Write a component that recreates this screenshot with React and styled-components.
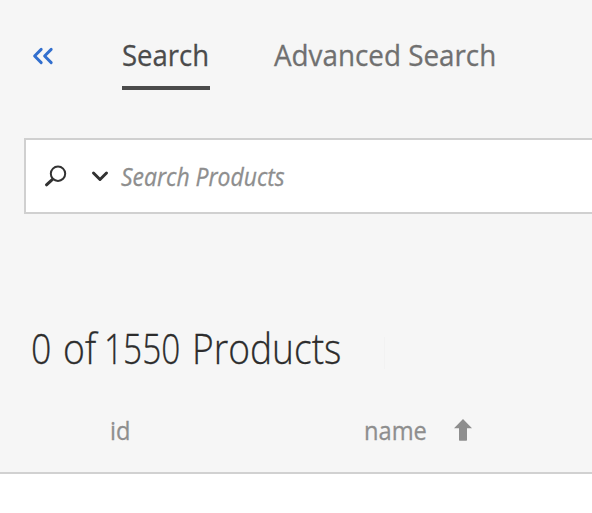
import React from "react";
import styled, { createGlobalStyle } from "styled-components";

const GlobalStyle = createGlobalStyle`
  * { box-sizing: border-box; }
  body { margin: 0; background: #fff; overflow: hidden; font-family: "Open Sans", "Noto Sans", sans-serif; }
`;

const Page = styled.main`
  width: 592px;
  height: 513px;
  overflow: hidden;
  background: #fff;
`;

const Panel = styled.section`
  height: 474px;
  background: #f6f6f6;
  border-bottom: 2px solid #d1d1d1;
`;

const Tabs = styled.nav`
  display: flex;
  height: 90px;
  padding-left: 32px;
`;

const Collapse = styled.button`
  width: 22px;
  height: 20px;
  margin: 46px 68px 0 0;
  padding: 0;
  border: 0;
  background: none;
  color: #326fce;
  svg { display: block; }
`;

const Tab = styled.a`
  width: ${(p) => p.$width}px;
  height: 90px;
  padding-top: 35px;
  margin-right: 64px;
  white-space: nowrap;
  line-height: 40px;
  color: ${(p) => (p.$active ? "#4b4b4b" : "#707070")};
  border-bottom: 4px solid ${(p) => (p.$active ? "#4b4b4b" : "transparent")};
`;

const Fit = styled.span`
  display: inline-block;
  font-size: ${(p) => p.$size}px;
  font-weight: ${(p) => p.$weight || 400};
  font-style: ${(p) => (p.$italic ? "italic" : "normal")};
  transform: scaleX(${(p) => p.$scale || 1});
  transform-origin: left center;
  white-space: nowrap;
  -webkit-text-stroke: ${(p) => p.$stroke || 0}px currentColor;
`;

const SearchBox = styled.div`
  display: flex;
  align-items: center;
  height: 76px;
  width: 600px;
  margin: 48px 0 0 24px;
  padding-left: 18px;
  background: #fff;
  border: 2px solid #d0d0d0;
  color: #323232;
`;

const Chevron = styled.svg`
  margin: 0 11px 0 22px;
`;

const Placeholder = styled.span`
  padding-top: 3px;
  color: #8e8e8e;
  line-height: 40px;
`;

const ResultBar = styled.div`
  display: flex;
  align-items: center;
  height: 60px;
  margin: 106px 0 0 31px;
`;

const Heading = styled.h1`
  display: flex;
  width: 353px;
  margin: 0;
  line-height: 60px;
  color: #2c2c2c;
`;

const Word = styled.span`
  width: ${(p) => p.$width}px;
`;

const Divider = styled.span`
  width: 1px;
  height: 32px;
  margin-top: 6px;
  background: #f2f2f2;
`;

const Columns = styled.div`
  display: flex;
  margin-top: 30px;
  height: 40px;
  line-height: 40px;
  padding-left: 110px;
  color: #8e8e8e;
`;

const Column = styled.span`
  width: ${(p) => p.$width}px;
`;

const Sort = styled.svg`
  margin-top: 9px;
`;

const words = [
  { text: "0", width: 32, scale: 0.86 },
  { text: "of", width: 41, scale: 0.9 },
  { text: "1550", width: 88, scale: 0.805 },
  { text: "Products", width: 160, scale: 0.895 },
];

export default function App() {
  return (
    <Page>
      <GlobalStyle />
      <Panel>
        <Tabs>
          <Collapse aria-label="Collapse">
            <svg width="22" height="20" fill="none" stroke="currentColor" strokeWidth="2.9" strokeLinecap="round" strokeLinejoin="round">
              <path d="M9.2 3.4 2.6 10l6.6 6.6M19.2 3.4 12.6 10l6.6 6.6" />
            </svg>
          </Collapse>
          <Tab $active $width={88}><Fit $size={30} $scale={0.917} $stroke={0.3}>Search</Fit></Tab>
          <Tab $width={223}><Fit $size={30} $scale={0.927} $stroke={0.3}>Advanced Search</Fit></Tab>
        </Tabs>
        <SearchBox>
          <svg width="24" height="24" fill="none" stroke="currentColor" strokeLinecap="round">
            <circle cx="14" cy="9.7" r="7.2" strokeWidth="2" />
            <path d="m8.5 15.3-6 5.5" strokeWidth="3" />
          </svg>
          <Chevron width="20" height="14" fill="none" stroke="currentColor" strokeWidth="3" strokeLinecap="round" strokeLinejoin="round">
            <path d="m3.5 4 6.5 6.5 6.5-6.5" />
          </Chevron>
          <Placeholder><Fit $size={25} $italic $scale={0.917} $stroke={0.3}>Search Products</Fit></Placeholder>
        </SearchBox>
        <ResultBar>
          <Heading>
            {words.map((w) => (
              <Word key={w.text} $width={w.width}>
                <Fit $size={41.5} $weight={300} $scale={w.scale} $stroke={0.3}>{w.text}</Fit>{" "}
              </Word>
            ))}
          </Heading>
          <Divider />
        </ResultBar>
        <Columns>
          <Column $width={254}><Fit $size={26} $scale={0.91} $stroke={0.3}>id</Fit></Column>
          <Column $width={90}><Fit $size={26} $scale={0.91} $stroke={0.3}>name</Fit></Column>
          <Sort width="18" height="22" fill="#8e8e8e"><path d="M9 0 18 9.2h-5V21a.7.7 0 0 1-.7.7H5.7A.7.7 0 0 1 5 21V9.2H0z" /></Sort>
        </Columns>
      </Panel>
    </Page>
  );
}
